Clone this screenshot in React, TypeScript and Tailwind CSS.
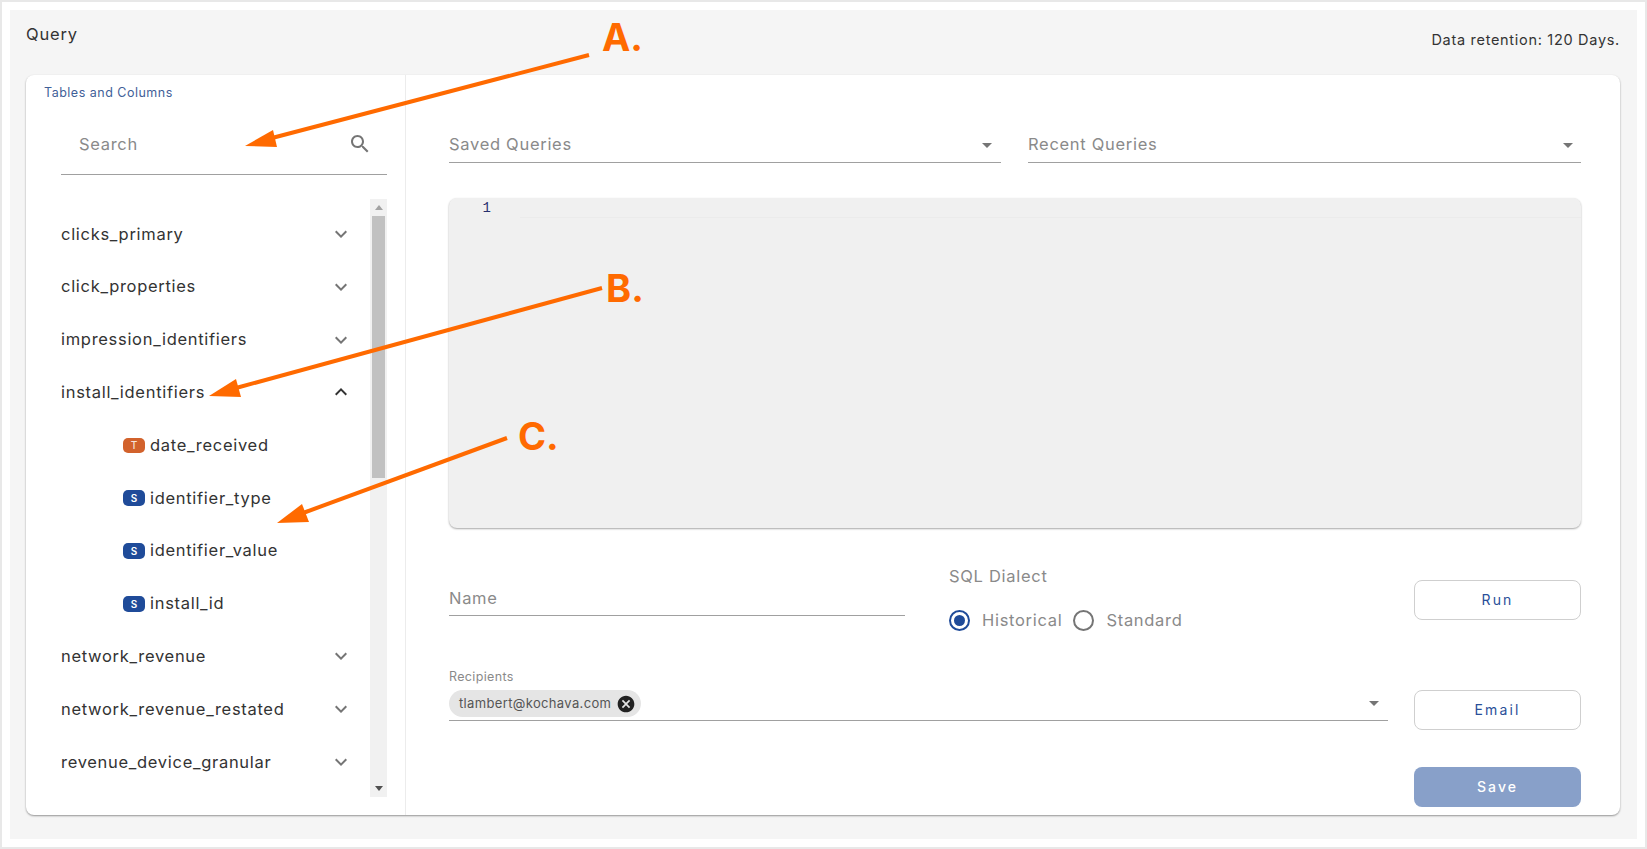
import React from "react";

const Icon = ({ d, className }: { d: string; className: string }) => (
  <svg viewBox="0 0 24 24" className={className} fill="currentColor" aria-hidden="true">
    <path d={d} />
  </svg>
);

const DOWN = "M16.59 8.59 12 13.17 7.41 8.59 6 10l6 6 6-6z";
const UP = "m12 8-6 6 1.41 1.41L12 10.83l4.59 4.58L18 14z";
const CARET = "M7 10l5 5 5-5z";
const SEARCH =
  "M15.5 14h-.79l-.28-.27C15.41 12.59 16 11.11 16 9.5 16 5.91 13.09 3 9.5 3S3 5.91 3 9.5 5.91 16 9.5 16c1.61 0 3.09-.59 4.23-1.57l.27.28v.79l5 4.99L20.49 19l-4.99-5zm-6 0C7.01 14 5 11.99 5 9.5S7.01 5 9.5 5 14 7.01 14 9.5 11.99 14 9.5 14z";
const CANCEL =
  "M12 2C6.47 2 2 6.47 2 12s4.47 10 10 10 10-4.47 10-10S17.53 2 12 2zm5 13.59L15.59 17 12 13.41 8.41 17 7 15.59 10.59 12 7 8.41 8.41 7 12 10.59 15.59 7 17 8.41 13.41 12 17 15.59z";

const Table = ({ name, open }: { name: string; open?: boolean }) => (
  <div className="flex h-[52.8px] items-center justify-between pr-[17px] text-[16.5px] tracking-[0.7px] text-[#333333]">
    <span>{name}</span>
    <Icon d={open ? UP : DOWN} className={open ? "size-6 text-[#333333]" : "size-6 text-[#757575]"} />
  </div>
);

const Column = ({ name, type }: { name: string; type: "T" | "S" }) => (
  <div className="flex h-[52.8px] items-center gap-[5px] pl-[62px] text-[16.5px] tracking-[0.7px] text-[#333333]">
    <span
      className={
        type === "T"
          ? "flex h-[15px] w-[22px] items-center justify-center rounded-[5px] bg-[#d2622c] text-[10px] font-medium leading-none tracking-normal text-[#f6e3d9]"
          : "flex h-[16px] w-[22px] items-center justify-center rounded-[5px] bg-[#1f4b99] text-[10px] font-semibold leading-none tracking-normal text-white"
      }
    >
      {type}
    </span>
    <span>{name}</span>
  </div>
);

const SelectBox = ({ label, className }: { label: string; className: string }) => (
  <div className={`flex h-[38px] items-center justify-between border-b border-[#a0a0a0] pt-[2px] text-[16.5px] tracking-[0.7px] text-[#8a8a8a] ${className}`}>
    <span>{label}</span>
    <Icon d={CARET} className="size-6 text-[#757575]" />
  </div>
);

const Outline = ({ label, className }: { label: string; className: string }) => (
  <button
    className={`h-10 w-[167px] rounded-lg border border-[#cfcfcf] bg-white text-sm font-normal tracking-[2.1px] text-[#2a4f99] ${className}`}
  >
    {label}
  </button>
);

const Annotations = () => (
  <>
    <svg className="pointer-events-none absolute -left-[2px] -top-[2px] h-[849px] w-[1647px]" viewBox="0 0 1647 849" aria-hidden="true">
      <g stroke="#ff6a00" strokeWidth="4" fill="none">
        <line x1="589" y1="55" x2="272" y2="138" />
        <line x1="602" y1="288" x2="236" y2="388" />
        <line x1="507" y1="438" x2="303" y2="513" />
      </g>
      <g fill="#ff6a00">
        <polygon points="245,146 273,130 277,147" />
        <polygon points="209,396 236,379 241,397" />
        <polygon points="277,523 302,504 309,522" />
      </g>
    </svg>
    <span className="absolute left-[600px] top-[13px] text-[38px] font-bold leading-[44px] text-[#ff6a00]">A.</span>
    <span className="absolute left-[604px] top-[264px] text-[38px] font-bold leading-[44px] text-[#ff6a00]">B.</span>
    <span className="absolute left-[516px] top-[412px] text-[38px] font-bold leading-[44px] text-[#ff6a00]">C.</span>
  </>
);

export default function App() {
  return (
    <div className="relative box-border h-[849px] w-[1647px] overflow-hidden border-2 border-[#e8e8e8] bg-white p-2 font-['Inter',sans-serif]">
      <div className="flex h-[829px] flex-col bg-[#f5f5f5] pl-4 pr-[17px]">
        <div className="flex h-[65px] items-start justify-between">
          <span className="pt-3 text-[16.5px] leading-6 tracking-[0.8px] text-[#333333]">Query</span>
          <span className="pt-5 text-[14.5px] leading-5 tracking-[0.7px] text-[#333333]">Data retention: 120 Days.</span>
        </div>

        <div className="flex h-[740px] rounded-lg bg-white shadow-[0_1px_2px_rgba(0,0,0,0.4)]">
          <aside className="flex w-[380px] shrink-0 flex-col border-r border-[#ececec]">
            <div className="pl-[18px] pt-[10px] text-[12.5px] leading-4 tracking-[0.5px] text-[#3f6098]">Tables and Columns</div>
            <div className="ml-[35px] mr-[18px] mt-[13px] flex h-[61px] items-center justify-between border-b border-[#a0a0a0] pl-[18px] pr-[15px] text-[16.5px] tracking-[0.7px] text-[#8a8a8a]">
              <span>Search</span>
              <Icon d={SEARCH} className="size-6 text-[#757575]" />
            </div>
            <div className="ml-[35px] mr-[18px] mt-[24px] flex h-[598px]">
              <div className="flex-1 overflow-hidden pt-[8.6px]">
                <Table name="clicks_primary" />
                <Table name="click_properties" />
                <Table name="impression_identifiers" />
                <Table name="install_identifiers" open />
                <Column name="date_received" type="T" />
                <Column name="identifier_type" type="S" />
                <Column name="identifier_value" type="S" />
                <Column name="install_id" type="S" />
                <Table name="network_revenue" />
                <Table name="network_revenue_restated" />
                <Table name="revenue_device_granular" />
              </div>
              <div className="flex w-[17px] flex-col items-center bg-[#f1f1f1]">
                <div className="flex h-[17px] items-center justify-center">
                  <div className="size-0 border-x-[4px] border-b-[5px] border-x-transparent border-b-[#a3a3a3]" />
                </div>
                <div className="h-[262px] w-[13px] bg-[#c1c1c1]" />
                <div className="mt-auto flex h-[17px] items-center justify-center">
                  <div className="size-0 border-x-[4px] border-t-[5px] border-x-transparent border-t-[#505050]" />
                </div>
              </div>
            </div>
          </aside>

          <main className="flex min-w-0 flex-1 flex-col pl-[43px] pr-[39px] pt-[50px]">
            <div className="flex gap-[27px]">
              <SelectBox label="Saved Queries" className="w-[552px] pr-[2px]" />
              <SelectBox label="Recent Queries" className="flex-1 pr-[1px]" />
            </div>

            <div className="mt-[35px] h-[330px] rounded-lg bg-[#f0f0f0] shadow-[0_1px_2px_rgba(0,0,0,0.35)]">
              <div className="flex h-[20px]">
                <div className="w-[71px] pr-[29px] text-right font-['Liberation_Mono',monospace] text-sm leading-5 text-[#27306e]">1</div>
                <div className="flex-1 border-b border-[#ebebeb]" />
              </div>
            </div>

            <div className="mt-9 flex items-start">
              <div className="flex h-[52px] w-[456px] items-end border-b border-[#a0a0a0] pb-[7px] text-[16.5px] leading-5 tracking-[0.7px] text-[#8a8a8a]">
                Name
              </div>
              <div className="ml-[44px] text-[16.5px] tracking-[0.7px] text-[#8a8a8a]">
                <div className="leading-6">SQL Dialect</div>
                <div className="mt-5 flex h-6 items-center leading-6">
                  <span className="flex size-[21px] items-center justify-center rounded-full border-2 border-[#1f4b99]">
                    <span className="size-[11px] rounded-full bg-[#1f4b99]" />
                  </span>
                  <span className="ml-3">Historical</span>
                  <span className="ml-[11px] size-[21px] rounded-full border-2 border-[#757575]" />
                  <span className="ml-3">Standard</span>
                </div>
              </div>
              <Outline label="Run" className="ml-auto mt-4" />
            </div>

            <div className="mt-[37px] flex items-start">
              <div className="w-[939px]">
                <div className="text-[12.5px] leading-4 tracking-[0.35px] text-[#8a8a8a]">Recipients</div>
                <div className="mt-[5px] flex items-start justify-between border-b border-[#a0a0a0] pb-[3px] pr-[2px]">
                  <span className="flex h-[27px] w-[192px] items-center justify-between rounded-full bg-[#e5e5e5] pl-[10px] pr-[5px] text-[13px] tracking-[0.35px] text-[#555555]">
                    tlambert@kochava.com
                    <Icon d={CANCEL} className="size-5 text-[#222222]" />
                  </span>
                  <Icon d={CARET} className="mt-[1px] size-6 text-[#757575]" />
                </div>
              </div>
              <Outline label="Email" className="ml-auto mt-[21px]" />
            </div>

            <div className="mt-[37px] flex justify-end">
              <button className="h-10 w-[167px] rounded-lg bg-[#88a0c9] text-sm font-medium tracking-[2.1px] text-white">
                Save
              </button>
            </div>
          </main>
        </div>
      </div>
      <Annotations />
    </div>
  );
}
